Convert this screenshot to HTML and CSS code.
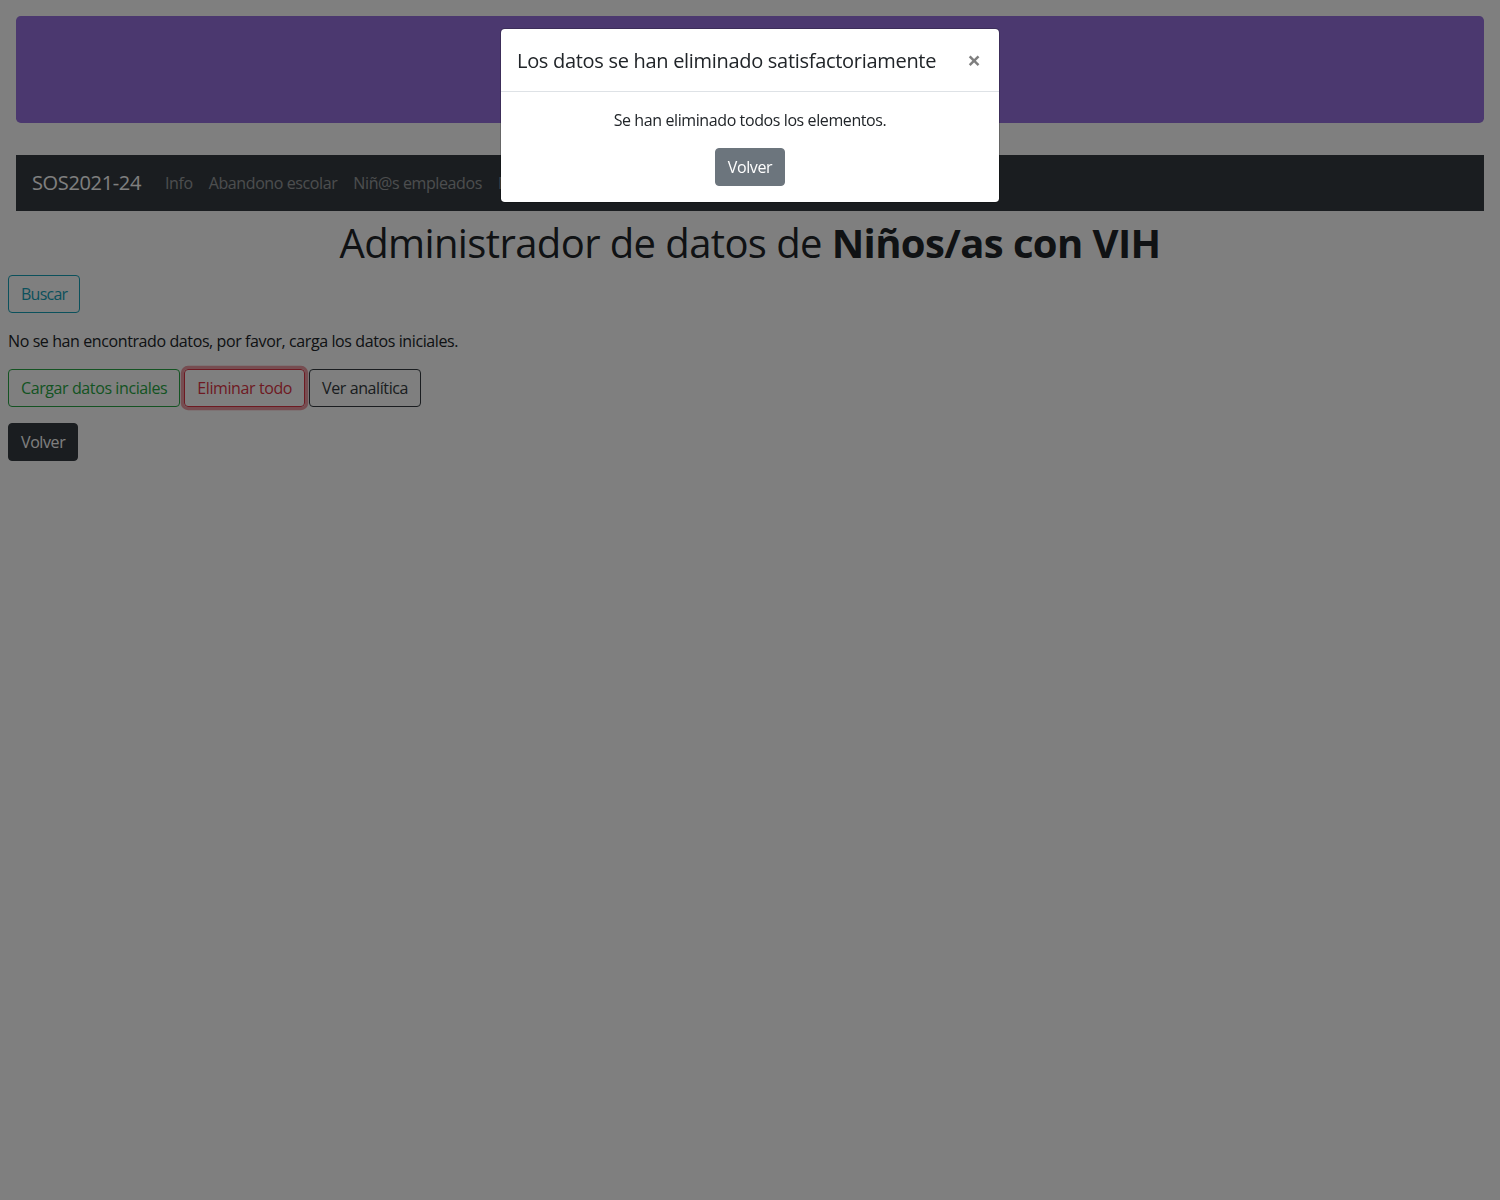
FILE: index.html
```html
<!DOCTYPE html>
<html lang="es">
<head>
<meta charset="utf-8">
<title>SOS2021-24</title>
<link rel="stylesheet" href="styles.css">
</head>
<body>
<div class="page">
  <header class="top">
    <div class="jumbotron"></div>
    <nav class="navbar">
      <span class="brand">SOS2021-24</span>
      <a class="nav-link">Info</a>
      <a class="nav-link">Abandono escolar</a>
      <a class="nav-link">Niñ@s empleados</a>
      <a class="nav-link">Niñ@s con VIH</a>
    </nav>
  </header>
  <main class="main">
    <h1 class="title">Administrador de datos de <strong>Niños/as con VIH</strong></h1>
    <button class="btn btn-outline-info btn-search">Buscar</button>
    <p class="msg">No se han encontrado datos, por favor, carga los datos iniciales.</p>
    <div class="btn-row">
      <button class="btn btn-outline-success">Cargar datos inciales</button>
      <button class="btn btn-outline-danger focus">Eliminar todo</button>
      <button class="btn btn-outline-dark">Ver analítica</button>
    </div>
    <button class="btn btn-dark">Volver</button>
  </main>
</div>
<div class="backdrop"></div>
<div class="modal-wrap">
  <div class="modal">
    <div class="modal-header">
      <h5 class="modal-title">Los datos se han eliminado satisfactoriamente</h5>
      <span class="close">×</span>
    </div>
    <div class="modal-body">
      <p class="modal-text">Se han eliminado todos los elementos.</p>
      <button class="btn btn-secondary">Volver</button>
    </div>
  </div>
</div>
</body>
</html>
```
FILE: styles.css
```css
* { box-sizing: border-box; }
html, body { height: 100%; }
body {
  margin: 0;
  padding: 8px;
  font-family: "Open Sans", "Noto Sans", sans-serif;
  font-size: 16px;
  line-height: 24px;
  color: #212529;
  background: #fff;
}
.top { padding: 8px 8px 0; }
.jumbotron {
  height: 107px;
  background: #9671de;
  border-radius: 4.8px;
  margin-bottom: 32px;
}
.navbar {
  height: 56px;
  background: #343a40;
  display: flex;
  align-items: center;
  padding: 8px 16px;
}
.brand {
  font-size: 20px;
  line-height: 30px;
  color: #fff;
  margin-right: 16px;
  letter-spacing: -0.35px;
}
.nav-link {
  padding: 8px;
  color: rgba(255,255,255,.5);
  font-size: 16px;
  letter-spacing: -0.4px;
}
.main { padding-top: 8px; }
.title {
  margin: 0 0 8px;
  text-align: center;
  font-size: 40px;
  line-height: 48px;
  font-weight: 500;
  letter-spacing: -0.6px;
}
.title strong { font-weight: 700; }
.btn {
  display: inline-block;
  font-family: inherit;
  font-size: 16px;
  line-height: 24px;
  padding: 6px 12px;
  border: 1px solid transparent;
  border-radius: 4px;
  background: transparent;
  letter-spacing: -0.4px;
  cursor: pointer;
}
.btn-search { letter-spacing: -0.75px; }
.btn-outline-info { color: #17a2b8; border-color: #17a2b8; }
.btn-outline-success { color: #28a745; border-color: #28a745; }
.btn-outline-danger { color: #dc3545; border-color: #dc3545; }
.btn-outline-danger.focus { box-shadow: 0 0 0 3.2px rgba(220,53,69,.5); }
.btn-outline-dark { color: #343a40; border-color: #343a40; }
.btn-dark { color: #fff; background: #343a40; border-color: #343a40; }
.btn-secondary { color: #fff; background: #6c757d; border-color: #6c757d; }
.msg { margin: 16px 0; letter-spacing: -0.4px; }
.btn-row { display: flex; gap: 4px; margin-bottom: 16px; }
.backdrop {
  position: fixed;
  inset: 0;
  background: rgba(0,0,0,.5);
}
.modal-wrap {
  position: fixed;
  inset: 0;
  display: flex;
  justify-content: center;
  align-items: flex-start;
  padding-top: 28px;
}
.modal {
  width: 500px;
  background: #fff;
  border: 1px solid rgba(0,0,0,.2);
  border-radius: 4.8px;
  background-clip: padding-box;
}
.modal-header {
  display: flex;
  align-items: flex-start;
  justify-content: space-between;
  padding: 17px 16px 15px;
  border-bottom: 1px solid #dee2e6;
}
.modal-title {
  margin: 0;
  font-size: 20px;
  line-height: 30px;
  font-weight: 500;
  letter-spacing: -0.3px;
}
.close {
  font-size: 24px;
  line-height: 28px;
  font-weight: 700;
  color: #000;
  opacity: .5;
  margin-right: 2px;
}
.modal-body {
  padding: 16px;
  text-align: center;
}
.modal-text { margin: 0 0 16px; font-size: 16px; letter-spacing: -0.4px; }
```
